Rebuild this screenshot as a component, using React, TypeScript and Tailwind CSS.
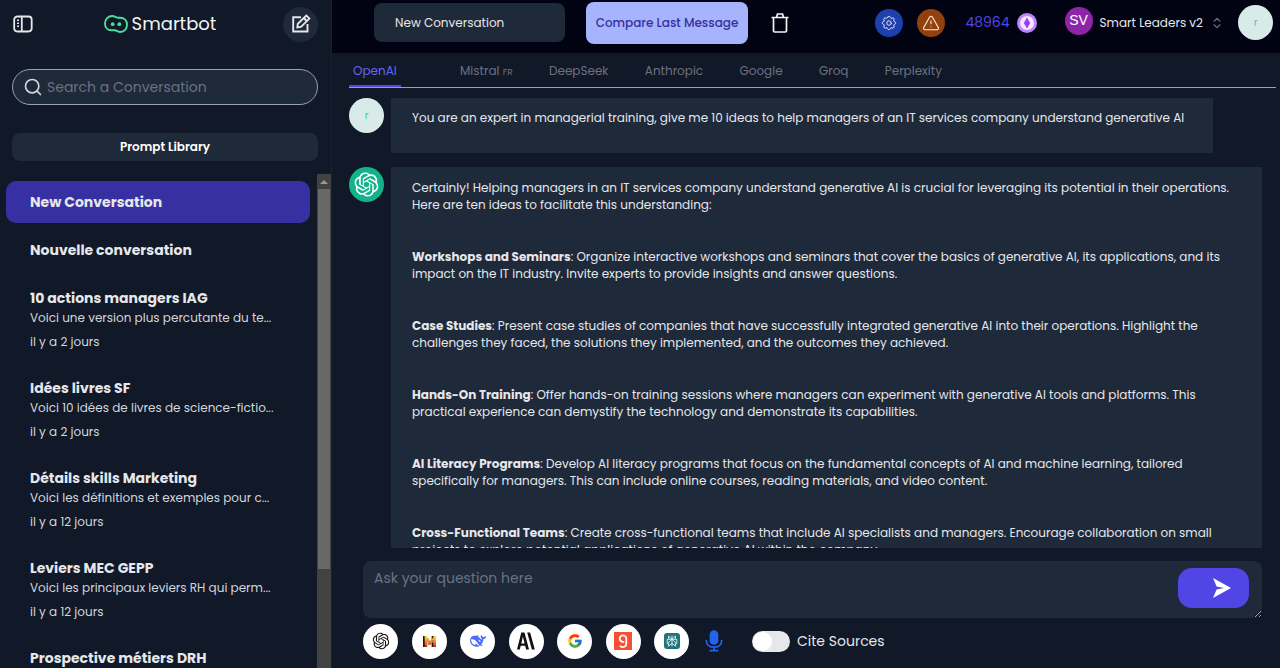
import type { ReactNode } from 'react';
import { HiOutlineCog } from 'react-icons/hi';
import { FcGoogle } from 'react-icons/fc';
import { RiOpenaiFill } from 'react-icons/ri';
import { ChevronsUpDown, TriangleAlert, Search } from 'lucide-react';

const conversations = [
  { title: 'New Conversation', active: true },
  { title: 'Nouvelle conversation' },
  { title: '10 actions managers IAG', text: 'Voici une version plus percutante du te...', date: 'il y a 2 jours' },
  { title: 'Idées livres SF', text: 'Voici 10 idées de livres de science-fictio...', date: 'il y a 2 jours' },
  { title: 'Détails skills Marketing', text: 'Voici les définitions et exemples pour c...', date: 'il y a 12 jours' },
  { title: 'Leviers MEC GEPP', text: 'Voici les principaux leviers RH qui perm...', date: 'il y a 12 jours' },
  { title: 'Prospective métiers DRH' },
];

const ideas: [string, string, string][] = [
  ['Workshops and Seminars', ': Organize interactive workshops and seminars that cover the basics of generative AI, its applications, and its', 'impact on the IT industry. Invite experts to provide insights and answer questions.'],
  ['Case Studies', ': Present case studies of companies that have successfully integrated generative AI into their operations. Highlight the', 'challenges they faced, the solutions they implemented, and the outcomes they achieved.'],
  ['Hands-On Training', ': Offer hands-on training sessions where managers can experiment with generative AI tools and platforms. This', 'practical experience can demystify the technology and demonstrate its capabilities.'],
  ['AI Literacy Programs', ': Develop AI literacy programs that focus on the fundamental concepts of AI and machine learning, tailored', 'specifically for managers. This can include online courses, reading materials, and video content.'],
  ['Cross-Functional Teams', ': Create cross-functional teams that include AI specialists and managers. Encourage collaboration on small', 'projects to explore potential applications of generative AI within the company.'],
];

function PanelIcon() {
  return (
    <svg viewBox="0 0 20 18" className="h-[18px] w-5" fill="none" stroke="#e5e7eb" strokeWidth="1.8">
      <rect x="1.200" y="1.500" width="17.500" height="15" rx="3.200" />
      <path d="M8.800 1.500v15" />
      <path d="M4 5.200h2M4 8.200h2M4 11.200h2" strokeWidth="1.400" />
    </svg>
  );
}

function BotLogo() {
  return (
    <svg viewBox="0 0 24 18" className="h-[18px] w-6" fill="none" stroke="#4ade9a" strokeWidth="1.9" strokeLinejoin="round">
      <path d="M8.200 1C10.600 1 11.800 2.600 13.600 2.700H16.200C20.200 2.700 23 5.600 23 9.700S20.300 17 16.400 17C13.600 17 13 15.300 10.600 15.300H7.400C3.600 15.300 1 12.400 1 8.400S4.200 1 8.200 1Z" />
      <circle cx="8.700" cy="9.200" r="1.900" fill="#4ade9a" stroke="none" />
      <circle cx="15.300" cy="9.200" r="1.900" fill="#4ade9a" stroke="none" />
    </svg>
  );
}

function EditIcon() {
  return (
    <svg viewBox="0 0 20 20" className="size-5" fill="none" stroke="#e5e7eb" strokeWidth="1.9">
      <path d="M10 3.200H2.200v14.300H16.500V10" />
      <path d="M6.300 13.400l.5-3.600 8.500-8.300 3.100 3.100-8.400 8.300zM12.800 4l3 3" />
    </svg>
  );
}

function TrashIcon() {
  return (
    <svg viewBox="0 0 18 20" className="h-5 w-[18px]" fill="none" stroke="#f3f4f6" strokeWidth="1.700">
      <path d="M.5 4.500h17M5.500 4.500L6.500 1h5l1 3.500M2.500 4.500v13.200c0 .8.500 1.300 1.300 1.300h10.400c.8 0 1.300-.5 1.300-1.300V4.500" />
    </svg>
  );
}

function TokenIcon() {
  return (
    <svg viewBox="0 0 20 20" className="size-5">
      <circle cx="10" cy="10" r="10" fill="#c084fc" />
      <circle cx="10" cy="10" r="7" fill="#f3e8ff" />
      <path d="M10 4.500l3.200 5.500-3.200 5.500L6.800 10z" fill="#a13df0" />
    </svg>
  );
}

function MistralIcon() {
  return (
    <svg viewBox="0 0 12 10" className="h-[11px] w-[13px]">
      <path d="M0 0h2v10H0zM4 2h1v2H4zM5 6h1v2H5zM8 0h2v10H8z" fill="#161616" />
      <path d="M1.500 0H4v2H1.500zM9.500 0H12v2H9.500z" fill="#f9d423" />
      <path d="M1.500 2H5.500v2h-4zM8 2h4v2H8z" fill="#fbae2a" />
      <path d="M1.500 4H12v2H1.500z" fill="#f77f1e" />
      <path d="M1.500 6H4v2H1.500zM5.700 6H7.900v2H5.700zM9.500 6H12v2H9.500z" fill="#f0551b" />
      <path d="M1.500 8H4v2H1.500zM9.500 8H12v2H9.500z" fill="#e1261c" />
    </svg>
  );
}

function WhaleIcon() {
  return (
    <svg viewBox="0 0 24 24" className="size-4" fill="#4d6bfe">
      <path d="M23.748 4.482c-.254-.124-.364.113-.512.234-.051.039-.094.09-.137.136-.372.397-.806.657-1.373.626-.829-.046-1.537.214-2.163.848-.133-.782-.575-1.248-1.247-1.548-.352-.156-.708-.311-.955-.65-.172-.241-.219-.51-.305-.774-.055-.16-.11-.323-.293-.35-.2-.031-.278.136-.356.276-.313.572-.434 1.202-.422 1.84.027 1.436.633 2.58 1.838 3.393.137.093.172.187.129.323-.082.28-.18.552-.266.833-.055.179-.137.217-.329.14a5.526 5.526 0 01-1.736-1.18c-.857-.828-1.631-1.742-2.597-2.458a11.365 11.365 0 00-.689-.471c-.985-.957.13-1.743.388-1.836.27-.098.093-.432-.779-.428-.872.004-1.67.295-2.687.684a3.055 3.055 0 01-.465.137 9.597 9.597 0 00-2.883-.102c-1.885.21-3.39 1.102-4.497 2.623C.082 8.606-.231 10.684.152 12.85c.403 2.284 1.569 4.175 3.36 5.653 1.858 1.533 3.997 2.284 6.438 2.14 1.482-.085 3.133-.284 4.994-1.86.47.234.962.327 1.78.397.63.059 1.236-.03 1.705-.128.735-.156.684-.837.419-.961-2.155-1.004-1.682-.595-2.113-.926 1.096-1.296 2.746-2.642 3.392-7.003.05-.347.007-.565 0-.845-.004-.17.035-.237.23-.256a4.173 4.173 0 001.545-.475c1.396-.763 1.96-2.015 2.093-3.517.02-.23-.004-.467-.247-.588zM11.581 18c-2.089-1.642-3.102-2.183-3.52-2.16-.392.024-.321.471-.235.763.09.288.207.486.371.739.114.167.192.416-.113.603-.673.416-1.842-.14-1.897-.167-1.361-.802-2.5-1.86-3.301-3.307-.774-1.393-1.224-2.887-1.298-4.482-.02-.386.093-.522.477-.592a4.696 4.696 0 011.529-.039c2.132.312 3.946 1.265 5.468 2.774.868.86 1.525 1.887 2.202 2.891.72 1.066 1.494 2.082 2.48 2.914.348.292.625.514.891.677-.802.09-2.14.11-3.054-.614zm1-6.44a.306.306 0 01.415-.287.302.302 0 01.2.288.306.306 0 01-.31.307.303.303 0 01-.304-.308zm3.11 1.596c-.2.081-.399.151-.59.16a1.245 1.245 0 01-.798-.254c-.274-.23-.47-.358-.552-.758a1.73 1.73 0 01.016-.588c.07-.327-.008-.537-.239-.727-.187-.156-.426-.199-.688-.199a.559.559 0 01-.254-.078c-.11-.054-.2-.19-.114-.358.028-.054.16-.186.192-.21.356-.202.767-.136 1.146.016.352.144.618.408 1.001.782.391.451.462.576.685.914.176.265.336.537.445.848.067.195-.019.354-.25.452z" />
    </svg>
  );
}

function AnthropicIcon() {
  return (
    <svg viewBox="0 0 18 18" className="size-[18px]" fill="#111">
      <path fillRule="evenodd" d="M4.300.5h3.200L12 17.500H9.100l-.9-3.700H3.700l-.9 3.700H0zM5.900 4.400l-1.600 7h3.300z" />
      <path d="M10.200.5h2.900l4.700 17h-2.900z" />
    </svg>
  );
}

function GroqIcon() {
  return (
    <svg viewBox="0 0 18 18" className="size-[18px]" fill="none">
      <path fill="#f55036" d="M0 0h18v18H0z" />
      <path d="M12.300 6.600A3.300 3.300 0 1 0 5.700 6.600A3.300 3.300 0 0 0 9 9.900h1.200M12.300 6.600V11.600c0 4.200-4.800 4.300-6.300 2" stroke="#fff" strokeWidth="1.700" />
    </svg>
  );
}

function PerplexityIcon() {
  return (
    <svg viewBox="0 0 16 16" className="size-4" fill="none">
      <rect width="16" height="16" rx="3" fill="#20737b" />
      <path d="M8 2.500v11M4.600 3L8 6.300 11.400 3v3.300H4.600zM4.600 6.300H3.200v4.400h1.400V9.400L8 6.300l3.400 3.100v1.300h1.400V6.300h-1.400M4.600 10.700v2.500L8 10.200l3.400 3v-2.500" stroke="#e5f5f3" strokeWidth=".9" />
    </svg>
  );
}

function MicIcon() {
  return (
    <svg viewBox="0 0 18 22" className="h-[22px] w-[18px]" fill="none" stroke="#2563eb" strokeWidth="1.700" strokeLinecap="round">
      <rect x="5.500" y="1" width="7" height="13" rx="3.500" fill="#2563eb" />
      <path d="M1.300 10.500C1.300 15 5 17.200 9 17.200s7.700-2.200 7.700-6.700M9 17.200V20.500M5.300 20.700h7.400" />
    </svg>
  );
}

function SendIcon() {
  return (
    <svg viewBox="0 0 20 20" className="size-5">
      <path d="M1 0l18 10L1 20l3.600-8.600L12 10 4.600 8.600z" fill="#fff" />
    </svg>
  );
}

const models: [string, ReactNode][] = [
  ['OpenAI', <RiOpenaiFill key="o" className="size-5 text-[#18181b]" />],
  ['Mistral', <MistralIcon key="m" />],
  ['DeepSeek', <WhaleIcon key="d" />],
  ['Anthropic', <AnthropicIcon key="a" />],
  ['Google', <FcGoogle key="g" className="size-4" />],
  ['Groq', <GroqIcon key="q" />],
  ['Perplexity', <PerplexityIcon key="p" />],
];

function Sidebar() {
  return (
    <aside className="flex w-[332px] shrink-0 flex-col border-r border-[#172130]">
      <div className="flex h-12 items-center justify-between px-[13px]">
        <button aria-label="Toggle sidebar"><PanelIcon /></button>
        <div className="flex items-center gap-1 pl-1">
          <BotLogo />
          <span className="text-[18px] leading-6 text-gray-100">Smartbot</span>
        </div>
        <button aria-label="New chat" className="flex size-[35px] items-center justify-center rounded-full bg-gray-800"><EditIcon /></button>
      </div>
      <label className="mt-[21px] mr-[13px] ml-3 flex h-9 items-center gap-1 rounded-full border border-gray-400 bg-gray-800 pr-3 pl-[10px]">
        <Search className="size-5 shrink-0 text-gray-300" strokeWidth={2} />
        <input aria-label="Search a Conversation" placeholder="Search a Conversation" className="min-w-0 flex-1 bg-transparent text-[14px] outline-none placeholder:text-gray-500" />
      </label>
      <button className="mt-7 mr-[13px] ml-3 h-7 shrink-0 rounded-lg bg-gray-800 text-[12px] font-semibold text-white">Prompt Library</button>
      <div className="mt-[13px] flex min-h-0 flex-1">
        <nav className="flex min-w-0 flex-1 flex-col gap-[6px] overflow-hidden pt-[7px] pr-[7px] pl-[6px]">
          {conversations.map((c) => (
            <a key={c.title} href="#" className={c.active ? 'block shrink-0 rounded-[10px] bg-[#3730a3] px-6 pt-[11px] pb-[10px]' : 'block shrink-0 px-6 pt-[11px] pb-[10px]'}>
              <span className="block truncate text-[14px] leading-[21px] font-bold text-gray-200">{c.title}</span>
              {c.text && <span className="block truncate text-[12px] leading-[18px] text-gray-300">{c.text}</span>}
              {c.date && <span className="mt-[6px] block text-[12px] leading-[18px] text-gray-300">{c.date}</span>}
            </a>
          ))}
        </nav>
        <div className="flex w-[14px] shrink-0 flex-col bg-[#424242] px-px" aria-hidden="true">
          <div className="flex h-[15px] items-center justify-center">
            <svg viewBox="0 0 8 4" className="h-1 w-2"><path d="M4 0l4 4H0z" fill="#9a9a9a" /></svg>
          </div>
          <div className="h-[77%] bg-[#686868]" />
        </div>
      </div>
    </aside>
  );
}

function Header() {
  return (
    <header className="flex h-[53px] shrink-0 items-center justify-between bg-[#020312] pr-[7px] pl-[42px]">
      <div className="flex items-center pb-2">
        <input aria-label="Conversation title" defaultValue="New Conversation" className="h-[39px] w-[191px] rounded-lg bg-gray-800 px-[21px] text-[12px] text-gray-200 outline-none" />
        <button className="ml-[21px] h-[42px] w-[162px] rounded-lg bg-[#a5b4fc] text-[12px] font-medium whitespace-nowrap text-[#3730a3]">Compare Last Message</button>
        <button aria-label="Delete conversation" className="ml-[23px]"><TrashIcon /></button>
      </div>
      <div className="flex items-center pb-2">
        <button aria-label="Settings" className="flex size-7 items-center justify-center rounded-full bg-[#1e40af]"><HiOutlineCog className="size-[18px] text-gray-200" strokeWidth={1.3} /></button>
        <button aria-label="Warnings" className="ml-[14px] flex size-7 items-center justify-center rounded-full bg-[#92400e]"><TriangleAlert className="size-[18px] text-orange-100" strokeWidth={1.5} /></button>
        <span className="ml-5 text-[14px] text-[#4f46e5]">48964</span>
        <span className="ml-[7px]"><TokenIcon /></span>
        <span className="mb-1 ml-7 flex size-7 items-center justify-center rounded-full bg-[#8e24aa] font-['Liberation_Sans',sans-serif] text-[14px] text-white">SV</span>
        <button className="ml-[7px] flex items-center gap-[7px] text-[12px] text-gray-200">Smart Leaders v2<ChevronsUpDown className="size-[14px] text-gray-500" strokeWidth={2} /></button>
        <span className="ml-[14px] flex size-[35px] items-center justify-center rounded-full bg-[#d8ebe8] text-[10px] text-[#4fc9a4]">r</span>
      </div>
    </header>
  );
}

function Tabs() {
  return (
    <nav className="mr-1 ml-[17px] flex h-[35px] shrink-0 border-b border-gray-400 text-[12px] leading-[35px] text-gray-500">
      <a href="#" className="mr-[59px] w-[52px] border-b-2 border-[#4f46e5] pl-1 text-[#6366f1]">OpenAI</a>
      <div className="flex w-[482px] justify-between">
        <a href="#">Mistral <span className="text-[9px]">FR</span></a>
        <a href="#">DeepSeek</a>
        <a href="#">Anthropic</a>
        <a href="#">Google</a>
        <a href="#">Groq</a>
        <a href="#">Perplexity</a>
      </div>
    </nav>
  );
}

function Messages() {
  return (
    <section className="flex min-h-0 flex-1 flex-col gap-[14px] overflow-hidden pt-[10px] pr-[18px] pl-[17px] text-[12px] leading-[17px] text-gray-200">
      <div className="flex shrink-0 gap-[7px]">
        <span className="flex size-[35px] shrink-0 items-center justify-center rounded-full bg-[#d8ebe8] text-[10px] text-[#34d399]">r</span>
        <p className="mr-[49px] h-[55px] flex-1 bg-gray-800 pt-[11px] pr-2 pl-[21px]">You are an expert in managerial training, give me 10 ideas to help managers of an IT services company understand generative AI</p>
      </div>
      <div className="flex shrink-0 gap-[7px]">
        <span className="flex size-[35px] shrink-0 items-center justify-center rounded-full bg-[#12b38a]"><RiOpenaiFill className="size-[29px] text-white" /></span>
        <div className="flex min-w-0 flex-1 flex-col gap-[35px] bg-gray-800 pt-3 pr-2 pb-5 pl-[21px]">
          <p>Certainly! Helping managers in an IT services company understand generative AI is crucial for leveraging its potential in their operations.<br />Here are ten ideas to facilitate this understanding:</p>
          {ideas.map(([name, first, second]) => (
            <p key={name}><strong className="font-bold">{name}</strong>{first}<br />{second}</p>
          ))}
        </div>
      </div>
    </section>
  );
}

function Composer() {
  return (
    <form className="mt-[13px] mr-[18px] ml-[31px] shrink-0" onSubmit={(e) => e.preventDefault()}>
      <div className="relative flex h-[57px]">
        <textarea aria-label="Ask your question here" placeholder="Ask your question here" className="w-full resize rounded-lg bg-gray-800 py-[7px] pr-24 pl-[11px] text-[14px] leading-5 text-gray-200 outline-none placeholder:text-gray-500" />
        <button aria-label="Send" className="absolute top-[7px] right-[13px] flex h-10 w-[71px] items-center justify-end rounded-[14px] bg-[#4f46e5] pr-[17px]"><SendIcon /></button>
      </div>
      <div className="flex h-[50px] items-center pb-1">
        <div className="flex w-[326px] justify-between">
          {models.map(([name, icon]) => (
            <button key={name} type="button" aria-label={name} className="flex size-[35px] items-center justify-center rounded-full bg-white">{icon}</button>
          ))}
        </div>
        <button type="button" aria-label="Dictate" className="ml-4"><MicIcon /></button>
        <label className="ml-[29px] flex items-center gap-[7px] text-[14px] text-gray-200">
          <input type="checkbox" className="peer sr-only" />
          <span className="flex h-[21px] w-[38px] items-center rounded-full bg-gray-200 px-px peer-checked:justify-end peer-checked:bg-indigo-600"><span className="size-[19px] rounded-full bg-white" /></span>
          Cite Sources
        </label>
      </div>
    </form>
  );
}

export default function App() {
  return (
    <div className="flex h-screen overflow-hidden bg-[#111827] font-['Poppins','Inter',sans-serif]">
      <Sidebar />
      <main className="flex min-w-0 flex-1 flex-col">
        <Header />
        <Tabs />
        <Messages />
        <Composer />
      </main>
    </div>
  );
}
